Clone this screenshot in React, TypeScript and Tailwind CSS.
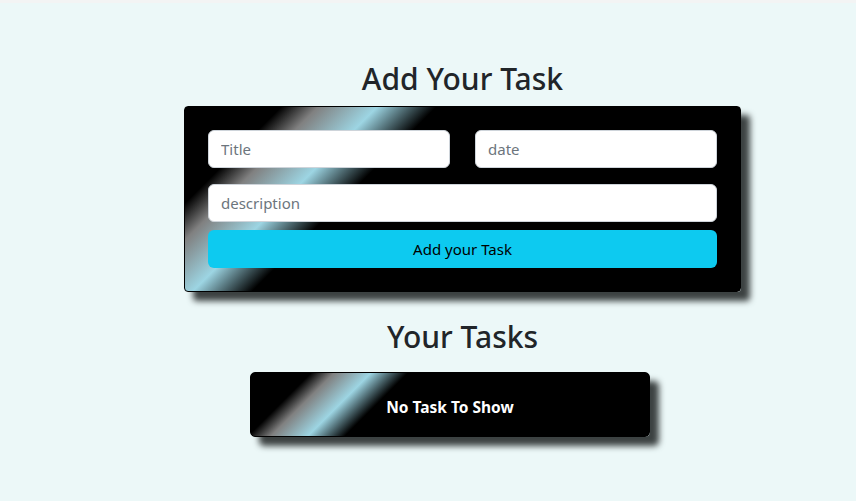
import { useState } from "react";

const App = () => {
  const [title, setTitle] = useState<string>("");
  const [date, setDate] = useState<string>("");
  const [desc, setDesc] = useState<string>("");

  return (
    <div className="min-h-[501px] bg-[#ecf8f8] font-['Noto_Sans',sans-serif] text-[#212529]">
      <div className="h-[3px] bg-[#f3f4f4]" />
      <div className="ml-[184px] w-[557px] pt-[56px]">
        <h2 className="text-center text-[30px] font-medium leading-[40px]">Add Your Task</h2>
        <div className="mt-[7px] rounded-[4px] border border-black bg-[linear-gradient(135deg,#000_13%,#808080_18%,#9dd5e3_26%,#000_34%)] px-[23px] pt-[23px] pb-[23px] shadow-[9px_9px_6px_#3c4242]">
          <div className="grid grid-cols-2 gap-x-[25px]">
            <input
              className="h-[38px] rounded-[6px] border border-[#ced4da] bg-white px-[12px] text-[15px] placeholder:text-[#6c757d] outline-none"
              placeholder="Title"
              value={title}
              onChange={(e) => setTitle(e.target.value)}
            />
            <input
              className="h-[38px] rounded-[6px] border border-[#ced4da] bg-white px-[12px] text-[15px] placeholder:text-[#6c757d] outline-none"
              placeholder="date"
              value={date}
              onChange={(e) => setDate(e.target.value)}
            />
          </div>
          <input
            className="mt-[16px] block h-[38px] w-full rounded-[6px] border border-[#ced4da] bg-white px-[12px] text-[15px] placeholder:text-[#6c757d] outline-none"
            placeholder="description"
            value={desc}
            onChange={(e) => setDesc(e.target.value)}
          />
          <button className="mt-[8px] block h-[38px] w-full rounded-[6px] bg-[#0dcaf0] text-[15px] text-black">
            Add your Task
          </button>
        </div>
        <h2 className="mt-[25px] text-center text-[30px] font-medium leading-[40px]">Your Tasks</h2>
        <div className="ml-[66px] mt-[15px] flex h-[65px] w-[400px] items-center justify-center rounded-[5px] border border-black bg-[linear-gradient(135deg,#000_13%,#808080_18%,#9dd5e3_26%,#000_34%)] shadow-[9px_9px_6px_#3c4242]">
          <span className="pt-[7px] text-[15.5px] font-bold text-white">No Task To Show</span>
        </div>
      </div>
    </div>
  );
};

export default App;
